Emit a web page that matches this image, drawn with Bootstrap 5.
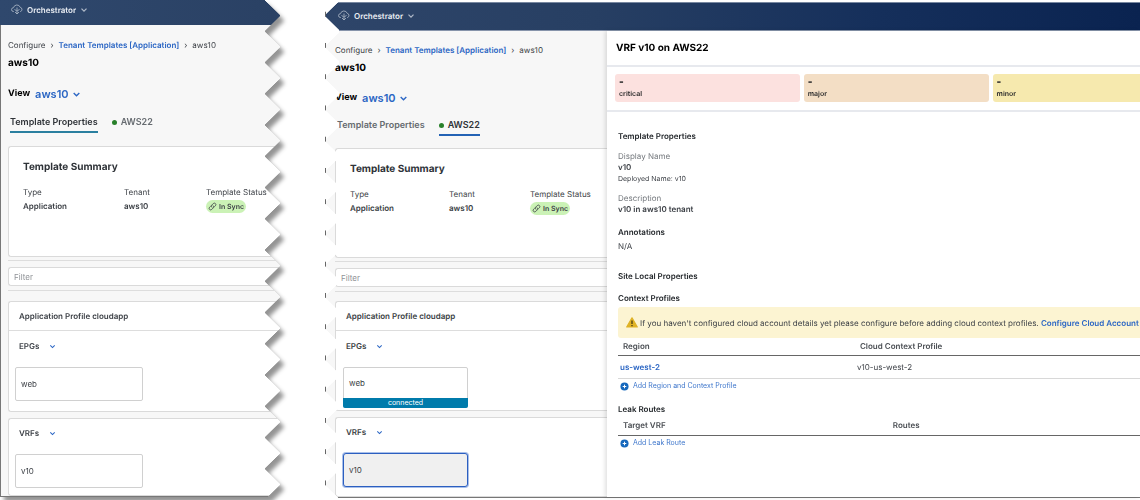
<!DOCTYPE html>
<html lang="en">
<head>
<meta charset="utf-8">
<meta name="viewport" content="width=device-width, initial-scale=1">
<title>Orchestrator - aws10</title>
<link href="https://cdn.jsdelivr.net/npm/bootstrap@5.3.0/dist/css/bootstrap.min.css" rel="stylesheet">
<style>
  body { font-family: Inter, "Liberation Sans", sans-serif; font-size: 8px; line-height: 12px; color: #3b3f45; background: #fff; overflow-x: hidden; text-rendering: geometricPrecision; }
  a { color: #2b66c4; text-decoration: none; }
  button { background: none; border: 0; padding: 0; color: inherit; text-align: left; }
  svg { display: block; flex: none; }
  .stage { gap: 45px; min-height: 100vh; }
  .shot-left { flex: 280 1 0; min-width: 0; filter: drop-shadow(4px 5px 2px rgba(0,0,0,.42)); }
  .shot-right { flex: 815 1 0; min-width: 0; }
  .torn { height: 100%; min-height: 100vh; }
  /* saw-tooth paper edge */
  .torn-end {
    -webkit-mask: linear-gradient(#000 0 0) left / calc(100% - 15px) 100% no-repeat,
      conic-gradient(from 225deg at 100% 50%, #000 90deg, transparent 0) right top / 16px calc(100% / 16) repeat-y;
  }
  .torn-start {
    -webkit-mask: linear-gradient(#000 0 0) right / calc(100% - 14px) 100% no-repeat,
      conic-gradient(from 45deg at 0 50%, #000 90deg, transparent 0) left top / 15px calc(100% / 16) repeat-y;
  }
  .ticks { position: absolute; z-index: 1; left: 0; top: 0; height: 100%; width: 1px;
    background: linear-gradient(transparent 38%, #666 38% 54%, transparent 54%) left top / 1px calc(100% / 16) repeat-y; }
  .topbar { color: #e9edf3; font-weight: 600; }
  .topbar svg { opacity: .7; }
  .shot-left .topbar { height: 25px; padding: 0 0 6px 11px; background: linear-gradient(90deg, #2f486d, #2a4164); }
  .shot-right .topbar { height: 29px; margin-top: 2px; padding: 0 0 2px 13px; background: linear-gradient(90deg, #2e4569, #273f63 33%, #152f5b 68%, #0a2350); border-top: 1px solid #7787a0; border-bottom: 1px solid #8794ab; }
  .sheet-left { background: #f7f7f7; border-left: 1px solid #777; border-bottom: 1px solid #777; min-height: 472px; }
  .sheet-right { border-bottom: 1px solid #777; min-height: 467px; }
  .pane { padding-left: 7px; }
  .shot-right .pane { flex: 0 0 34.6%; min-width: 0; background: #f7f7f7; padding-left: 10px; }
  .drawer { flex: 1 1 0; min-width: 0; position: relative; background: #fff; box-shadow: -2px 0 4px rgba(0,0,0,.12); overflow: hidden; }
  .crumbs { line-height: 16px; gap: 5px; padding-top: 12px; white-space: nowrap; }
  .crumbs a { font-weight: 600; }
  .page-name { font-size: 10px; line-height: 20px; font-weight: 700; color: #000; margin: 0; }
  .view-row { font-size: 9px; line-height: 22px; font-weight: 700; color: #000; margin-top: 10px; gap: 5px; }
  .view-row button { font-size: 11px; color: #2b66c4; gap: 3px; font-weight: 600; }
  .tabs { font-size: 9px; line-height: 18px; margin-top: 8px; padding-left: 2px; gap: 14px; }
  .tabs button { font-weight: 600; color: #666b70; border-bottom: 2px solid transparent; white-space: nowrap; }
  .tabs .active { color: #2f3338; border-color: #2a7f9f; }
  .shot-right .tabs .active { border-color: #2463b5; }
  .dot { width: 5px; height: 5px; border-radius: 50%; background: #28802a; }
  .panel { background: #fff; border: 1px solid #dadada; border-right: 0; border-radius: 3px 0 0 3px; }
  .summary { height: 111px; margin-top: 13px; padding: 12px 0 0 14px; }
  .summary h2 { font-size: 10px; line-height: 16px; font-weight: 700; color: #2f3338; margin: 0 0 10px; }
  .summary dl { margin: 0; display: grid; grid-template-columns: 101px 82px 1fr; white-space: nowrap; }
  .summary dt { font-weight: 400; line-height: 14px; }
  .summary dd { font-weight: 600; line-height: 14px; margin: 0; }
  .sync { display: inline-flex; align-items: center; gap: 2px; height: 13px; border-radius: 7px; padding: 0 2px; background: #cbf2b6; font-size: 7px; margin-top: 1px; }
  .rule { border-top: 1px solid #ddd; margin-top: 3px; }
  .filter { display: block; width: 100%; height: 19px; margin-top: 6px; padding: 0 5px; font-size: 8px; line-height: 12px; outline: 0; }
  .filter::placeholder { color: #8f9296; }
  .profile { margin-top: 10px; height: 111px; }
  .profile h3 { font-size: 8px; line-height: 28px; border-bottom: 1px solid #ddd; padding-left: 10px; margin: 0; font-weight: 600; }
  .group-name { line-height: 16px; font-weight: 600; padding-left: 10px; gap: 10px; margin-top: 7px; }
  .node { display: block; width: 128px; height: 34px; margin: 13px 0 0 6px; padding-left: 5px; border: 1px solid #d0d0d0; border-radius: 2px; background: #fff; }
  .vrfs { margin-top: 6px; height: 78px; }
  .vrfs .group-name { margin-top: 6px; }
  /* second capture, slightly denser */
  .shot-right .crumbs { padding-top: 11px; }
  .shot-right .view-row { margin-top: 9px; }
  .shot-right .tabs { margin-top: 7px; }
  .shot-right .summary { height: 110px; margin-top: 12px; }
  .shot-right .summary dl { grid-template-columns: 99px 81px 1fr; }
  .shot-right .profile { height: 110px; margin-top: 9px; }
  .shot-right .node { width: 125px; margin-left: 7px; }
  .shot-right .vrfs { height: 80px; }
  .shot-right .linked { height: 41px; padding: 0; }
  .linked span { display: block; padding-left: 5px; line-height: 30px; }
  .linked small { display: block; margin: 0 -1px; background: #007bab; color: #fff; text-align: center; font-size: 7px; line-height: 10px; border-radius: 0 0 2px 2px; }
  .picked { border: 1px solid #2c5fc0; border-radius: 3px; background: #f0f0f0; box-shadow: 0 0 0 1px #a9c0ea; }
  .drawer-title { font-size: 10px; line-height: 34px; font-weight: 700; color: #000; margin: 0; padding-left: 9px; border-bottom: 2px solid #e7e9ee; }
  .faults { gap: 4px; padding: 7px 0 8px 8px; border-bottom: 2px solid #e7e9ee; font-size: 7px; font-weight: 600; color: #2b2b2b; }
  .fault { flex: 0 0 35.2%; height: 28px; padding: 3px 4px; border-radius: 3px; line-height: 12px; }
  .fault b { display: block; font-size: 10px; line-height: 11px; }
  .critical { background: #fce1df; }
  .major { background: #f3dec5; }
  .minor { background: #f6e9ae; }
  .props { padding: 17px 0 0 11px; }
  .props h4 { font-size: 8px; line-height: 14px; font-weight: 600; color: #24282c; margin: 0; }
  .props dl { margin: 8px 0 0; line-height: 11px; }
  .props dl + dl { margin-top: 9px; }
  .props dt { font-weight: 400; color: #74787d; }
  .props dd { margin: 0; font-weight: 600; }
  .props .annotations { margin-top: 10px; }
  .props .leaks { margin-top: 9px; }
  .props .deployed { font-size: 7px; font-weight: 400; }
  .none { line-height: 14px; }
  .notice { height: 31px; margin-top: 2px; padding-left: 8px; gap: 2px; background: #fcf4d2; border-radius: 3px 0 0 3px; white-space: nowrap; }
  .notice a { font-weight: 600; }
  .grid-table { width: 100%; table-layout: fixed; }
  .grid-table th { font-weight: 600; line-height: 17px; padding: 0 0 0 5px; border-bottom: 1px solid #666; color: #4a4e53; }
  .grid-table td { line-height: 22px; padding: 0 0 0 2px; border-bottom: 1px solid #d8d8d8; }
  .grid-table td a { font-weight: 600; }
  .routes th { line-height: 19px; }
  .add { color: #3f77cc; font-size: 7px; line-height: 14px; gap: 4px; padding-left: 2px; }
</style>
</head>
<body>
<svg width="0" height="0" class="position-absolute" aria-hidden="true">
  <symbol id="chev" viewBox="0 0 8 8"><path d="M1.500 2.700 4 5.200l2.500-2.500" fill="none" stroke="currentColor" stroke-width="1.200"/></symbol>
  <symbol id="cloud" viewBox="0 0 12 12"><g fill="none" stroke="currentColor" stroke-width=".8"><path d="M3 7.500H2.400A1.900 1.900 0 0 1 2.500 3.700 3.500 3.500 0 0 1 9.200 3.300 2.200 2.200 0 0 1 9.600 7.500H9"/><path d="M6 3.500v3M3.500 5.500 6 7l2.500-1.500M4 8l2 2 2-2M6 7v3"/></g></symbol>
  <symbol id="link" viewBox="0 0 10 10"><g fill="none" stroke="currentColor" stroke-width=".9" stroke-linecap="round"><path d="M4.200 5.800a1.700 1.700 0 0 1 0-2.400L5.900 1.700a1.700 1.700 0 0 1 2.400 2.400L7.200 5.200"/><path d="M5.800 4.200a1.700 1.700 0 0 1 0 2.400L4.100 8.300A1.700 1.700 0 0 1 1.700 5.900L2.800 4.800"/></g></symbol>
  <symbol id="plus" viewBox="0 0 10 10"><circle cx="5" cy="5" r="4.500" fill="#1668bd"/><path d="M5 3v4M3 5h4" stroke="#fff" stroke-width="1.100"/></symbol>
  <symbol id="warn" viewBox="0 0 12 11"><path d="M6 .8 11.300 10H.7z" fill="#dfb224" stroke="#dfb224" stroke-width="1.200" stroke-linejoin="round"/><path d="M6 3.500v3.500M6 8v1.300" stroke="#3d3414" stroke-width="1.200"/></symbol>
</svg>
<div class="stage d-flex">
  <section class="shot-left"><div class="torn torn-end">
    <header class="topbar d-flex align-items-center">
      <svg width="12" height="12"><use href="#cloud"/></svg><span class="ms-1">Orchestrator</span><svg class="ms-1" width="8" height="8"><use href="#chev"/></svg>
    </header>
    <div class="sheet-left"><main class="pane">
      <nav class="crumbs d-flex" aria-label="breadcrumb"><span>Configure</span><span>›</span><a href="#">Tenant Templates [Application]</a><span>›</span><span>aws10</span></nav>
      <h1 class="page-name">aws10</h1>
      <div class="view-row d-flex align-items-center"><span>View</span><button class="d-flex align-items-center">aws10 <svg width="9" height="9"><use href="#chev"/></svg></button></div>
      <div class="tabs d-flex"><button class="active">Template Properties</button><button class="d-flex align-items-center gap-1"><i class="dot"></i>AWS22</button></div>
      <section class="panel summary"><h2>Template Summary</h2>
        <dl><dt>Type</dt><dt>Tenant</dt><dt>Template Status</dt><dd>Application</dd><dd>aws10</dd><dd><span class="sync"><svg width="9" height="9"><use href="#link"/></svg>In Sync</span></dd></dl></section>
      <div class="rule"></div>
      <input class="panel filter" placeholder="Filter" aria-label="Filter">
      <div class="rule mt-1"></div>
      <section class="panel profile"><h3>Application Profile cloudapp</h3>
        <div class="group-name d-flex align-items-center">EPGs <svg width="7" height="7" color="#2b66c4"><use href="#chev"/></svg></div>
        <button class="node">web</button></section>
      <section class="panel vrfs"><div class="group-name d-flex align-items-center">VRFs <svg width="7" height="7" color="#2b66c4"><use href="#chev"/></svg></div>
        <button class="node">v10</button></section>
    </main></div>
  </div></section>

  <section class="shot-right position-relative"><div class="ticks"></div><div class="torn torn-start">
    <div class="d-flex flex-column"><header class="topbar d-flex align-items-center">
      <svg width="12" height="12"><use href="#cloud"/></svg><span class="ms-1">Orchestrator</span><svg class="ms-1" width="8" height="8"><use href="#chev"/></svg>
    </header>
    <div class="sheet-right d-flex"><main class="pane">
      <nav class="crumbs d-flex" aria-label="breadcrumb"><span>Configure</span><span>›</span><a href="#">Tenant Templates [Application]</a><span>›</span><span>aws10</span></nav>
      <h1 class="page-name">aws10</h1>
      <div class="view-row d-flex align-items-center"><span>View</span><button class="d-flex align-items-center">aws10 <svg width="9" height="9"><use href="#chev"/></svg></button></div>
      <div class="tabs d-flex"><button>Template Properties</button><button class="active d-flex align-items-center gap-1"><i class="dot"></i>AWS22</button></div>
      <section class="panel summary"><h2>Template Summary</h2>
        <dl><dt>Type</dt><dt>Tenant</dt><dt>Template Status</dt><dd>Application</dd><dd>aws10</dd><dd><span class="sync"><svg width="9" height="9"><use href="#link"/></svg>In Sync</span></dd></dl></section>
      <div class="rule"></div>
      <input class="panel filter" placeholder="Filter" aria-label="Filter">
      <div class="rule mt-1"></div>
      <section class="panel profile"><h3>Application Profile cloudapp</h3>
        <div class="group-name d-flex align-items-center">EPGs <svg width="7" height="7" color="#2b66c4"><use href="#chev"/></svg></div>
        <button class="node linked"><span>web</span><small>connected</small></button></section>
      <section class="panel vrfs"><div class="group-name d-flex align-items-center">VRFs <svg width="7" height="7" color="#2b66c4"><use href="#chev"/></svg></div>
        <button class="node picked">v10</button></section>
    </main>
    <aside class="drawer">
      <h2 class="drawer-title">VRF v10 on AWS22</h2>
      <div class="faults d-flex">
        <div class="fault critical"><b>-</b>critical</div>
        <div class="fault major"><b>-</b>major</div>
        <div class="fault minor"><b>-</b>minor</div>
      </div>
      <div class="props">
        <h4>Template Properties</h4>
        <dl><dt>Display Name</dt><dd>v10</dd><dd class="deployed">Deployed Name: v10</dd></dl>
        <dl><dt>Description</dt><dd>v10 in aws10 tenant</dd></dl>
        <h4 class="annotations">Annotations</h4><div class="none">N/A</div>
        <h4 class="mt-3">Site Local Properties</h4>
        <h4 class="mt-2">Context Profiles</h4>
        <div class="notice d-flex align-items-center"><svg width="12" height="11"><use href="#warn"/></svg><span>If you haven't configured cloud account details yet please configure before adding cloud context profiles. <a href="#">Configure Cloud Account</a></span></div>
        <table class="grid-table"><colgroup><col style="width:45.400%"><col></colgroup><thead><tr><th>Region</th><th>Cloud Context Profile</th></tr></thead><tbody><tr><td><a href="#">us-west-2</a></td><td>v10-us-west-2</td></tr></tbody></table>
        <button class="add d-flex align-items-center"><svg width="9" height="9"><use href="#plus"/></svg>Add Region and Context Profile</button>
        <h4 class="leaks">Leak Routes</h4>
        <table class="grid-table routes"><colgroup><col style="width:51.700%"><col></colgroup><thead><tr><th>Target VRF</th><th>Routes</th></tr></thead></table>
        <button class="add d-flex align-items-center"><svg width="9" height="9"><use href="#plus"/></svg>Add Leak Route</button>
      </div>
    </aside></div></div>
  </div></section>
</div>
<script src="https://cdn.jsdelivr.net/npm/bootstrap@5.3.0/dist/js/bootstrap.bundle.min.js"></script>
</body>
</html>
